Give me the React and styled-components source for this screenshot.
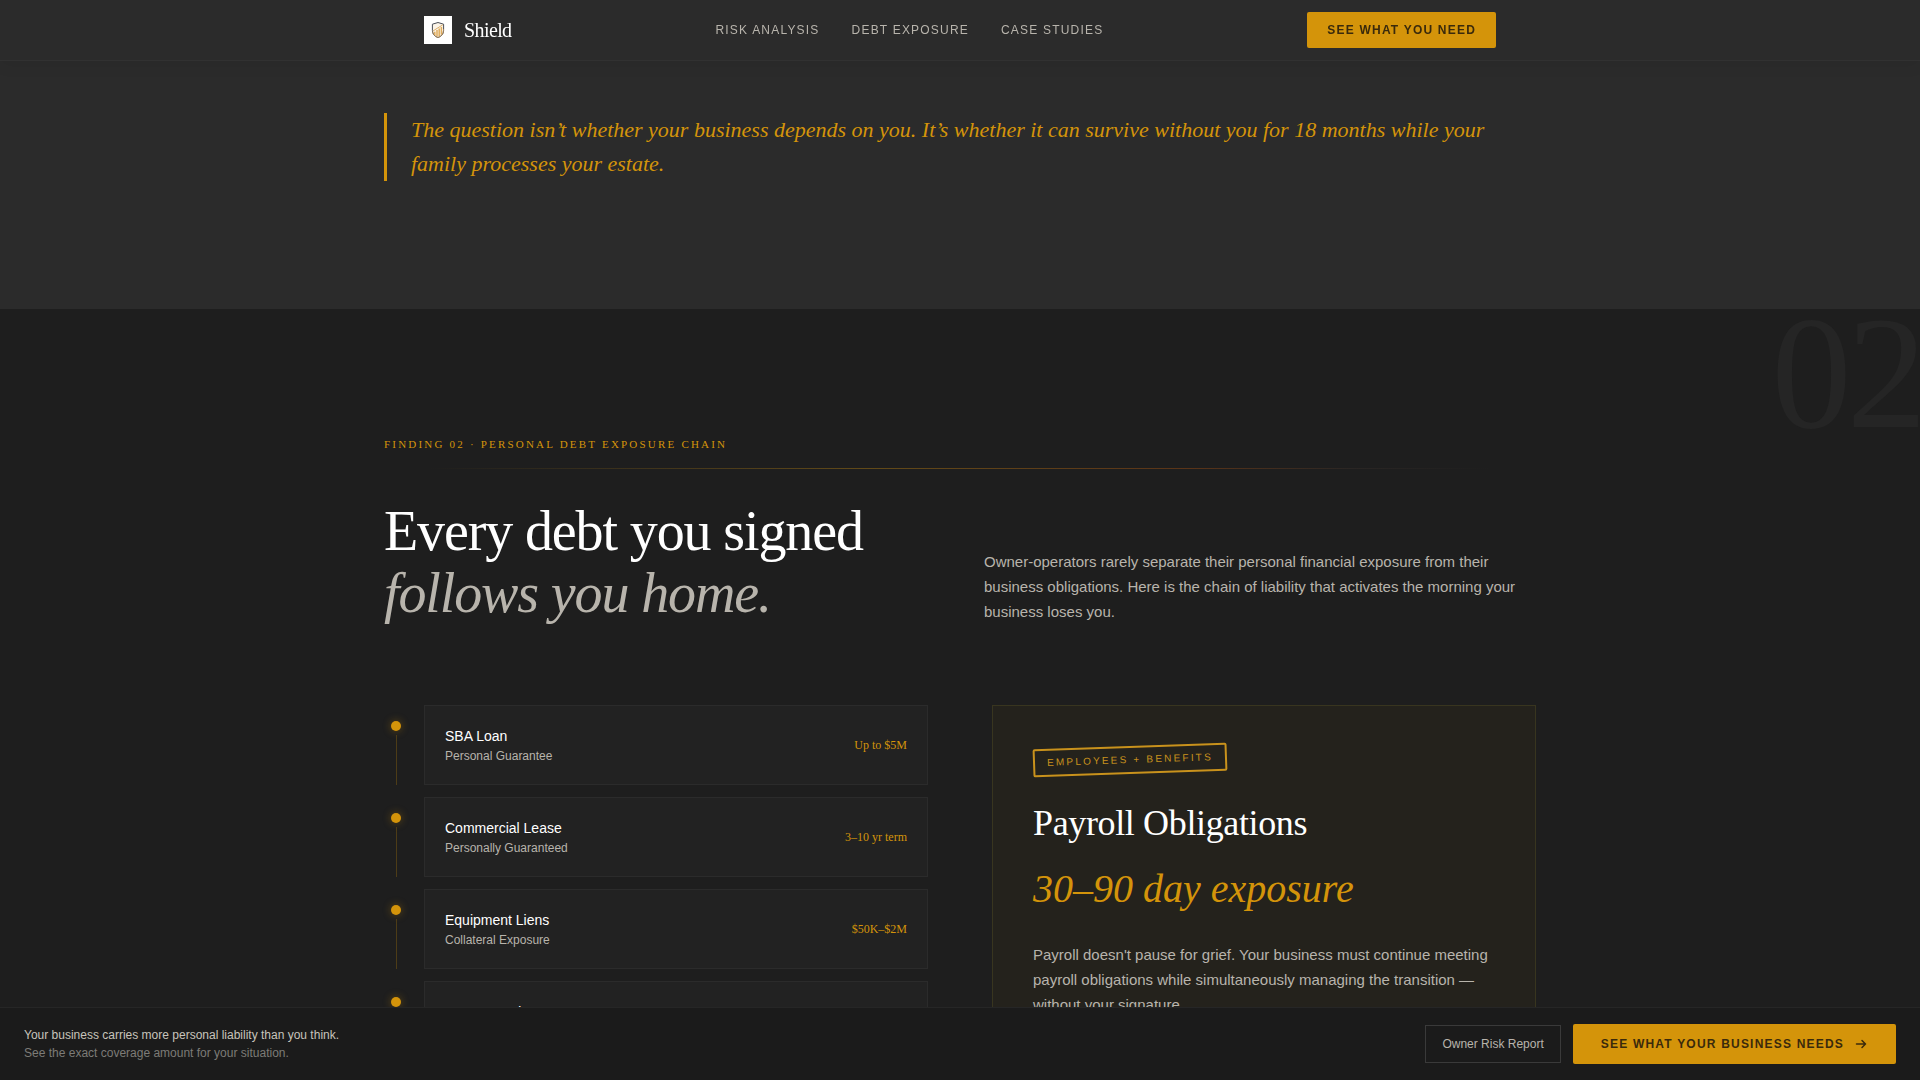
import React from "react";
import styled, { createGlobalStyle } from "styled-components";

const serif = `"Liberation Serif", "Times New Roman", serif`;
const sans = `"Liberation Sans", Arial, sans-serif`;

const debts = [
  { title: "SBA Loan", note: "Personal Guarantee", amount: "Up to $5M" },
  { title: "Commercial Lease", note: "Personally Guaranteed", amount: "3–10 yr term" },
  { title: "Equipment Liens", note: "Collateral Exposure", amount: "$50K–$2M" },
  { title: "Revenue Advance", note: "Personal Guarantee", amount: "$25K–$500K" },
];

function ShieldLogo() {
  return (
    <svg width="28" height="28" viewBox="0 0 28 28" aria-hidden="true">
      <rect width="28" height="28" fill="#ffffff" />
      <path d="M14 6.5 L19.6 8.2 V14.5 C19.6 18 17.4 20.4 14 21.6 C10.6 20.4 8.4 18 8.4 14.5 V8.2 Z" fill="#fbf4e8" stroke="#4a4f58" strokeWidth="1" />
      <path d="M8.5 15.5 C8.9 18.3 10.9 20.4 14 21.5 C17.1 20.4 19.5 18 19.5 14.5 V13" fill="none" stroke="#a8875c" strokeWidth="1" />
      <path d="M10.8 19 V15.8 M13 20.3 V14 M15.2 20.3 V12.5 M17.4 18.6 V11" stroke="#e0ac5c" strokeWidth="1.5" />
      <path d="M9 15 L13 12.4 L18.8 8.8" fill="none" stroke="#d8a860" strokeWidth="0.9" />
    </svg>
  );
}

function Arrow() {
  return (
    <svg width="14" height="14" viewBox="0 0 14 14" fill="none" stroke="currentColor" strokeWidth="1.5" strokeLinecap="round" strokeLinejoin="round" aria-hidden="true">
      <path d="M2.5 7 H11.5 M8 3.5 L11.5 7 L8 10.5" />
    </svg>
  );
}

function DebtItem({ title, note, amount }) {
  return (
    <Item>
      <Track>
        <Dot />
        <Stem />
      </Track>
      <DebtCard>
        <div>
          <DebtTitle>{title}</DebtTitle>
          <DebtNote>{note}</DebtNote>
        </div>
        <Amount>{amount}</Amount>
      </DebtCard>
    </Item>
  );
}

function App() {
  return (
    <>
      <GlobalStyle />
      <Header>
        <HeaderInner>
          <Brand href="#top">
            <ShieldLogo />
            Shield
          </Brand>
          <Nav>
            <NavLink href="#risk">Risk Analysis</NavLink>
            <NavLink href="#debt">Debt Exposure</NavLink>
            <NavLink href="#cases">Case Studies</NavLink>
          </Nav>
          <Button>See What You Need</Button>
        </HeaderInner>
      </Header>

      <main>
        <QuoteSection>
          <Container>
            <Quote>
              The question isn’t whether your business depends on you. It’s whether it can survive without you for 18 months while your
              family processes your estate.
            </Quote>
          </Container>
        </QuoteSection>

        <DebtSection id="debt">
          <Numeral aria-hidden="true">02</Numeral>
          <Container>
            <Eyebrow>Finding 02 · Personal Debt Exposure Chain</Eyebrow>
            <Rule />
            <Intro>
              <Heading>
                Every debt you signed <em>follows you home.</em>
              </Heading>
              <Copy>
                Owner-operators rarely separate their personal financial exposure from their business obligations. Here is the chain of
                liability that activates the morning your business loses you.
              </Copy>
            </Intro>
            <Columns>
              <List>
                {debts.map((debt) => (
                  <DebtItem key={debt.title} {...debt} />
                ))}
              </List>
              <Panel>
                <Stamp>Employees + Benefits</Stamp>
                <PanelTitle>Payroll Obligations</PanelTitle>
                <PanelFigure>30–90 day exposure</PanelFigure>
                <Copy>
                  Payroll doesn't pause for grief. Your business must continue meeting payroll obligations while simultaneously managing the
                  transition — without your signature.
                </Copy>
              </Panel>
            </Columns>
          </Container>
        </DebtSection>
      </main>

      <BottomBar>
        <div>
          <BarText>Your business carries more personal liability than you think.</BarText>
          <BarText $muted>See the exact coverage amount for your situation.</BarText>
        </div>
        <BarActions>
          <OutlineButton>Owner Risk Report</OutlineButton>
          <Button $large>
            See What Your Business Needs
            <Arrow />
          </Button>
        </BarActions>
      </BottomBar>
    </>
  );
}

const GlobalStyle = createGlobalStyle`
  * {
    box-sizing: border-box;
    margin: 0;
    padding: 0;
  }

  body {
    background: #1e1e1e;
    color: #ffffff;
    font-family: ${sans};
  }
`;

const Container = styled.div`
  width: 100%;
  max-width: 1152px;
  margin: 0 auto;
`;

const Header = styled.header`
  position: fixed;
  top: 0;
  left: 0;
  right: 0;
  z-index: 10;
  background: #2b2b2b;
  border-bottom: 1px solid #313131;
  box-shadow: 0 4px 16px rgba(0, 0, 0, 0.06);
`;

const HeaderInner = styled(Container)`
  display: flex;
  align-items: center;
  justify-content: space-between;
  padding: 12px 40px;
`;

const Brand = styled.a`
  display: flex;
  align-items: center;
  gap: 12px;
  font-family: ${serif};
  font-size: 20px;
  letter-spacing: -0.03em;
  color: #ffffff;
  text-decoration: none;
`;

const Nav = styled.nav`
  display: flex;
  gap: 32px;
`;

const NavLink = styled.a`
  font-size: 12px;
  letter-spacing: 0.1em;
  text-transform: uppercase;
  text-decoration: none;
  color: #b8b4ac;
`;

const Button = styled.button`
  display: flex;
  align-items: center;
  gap: 10px;
  height: ${(props) => (props.$large ? "40px" : "36px")};
  padding: 0 ${(props) => (props.$large ? "28px" : "20px")};
  border: none;
  border-radius: 2px;
  background: #d4940a;
  color: #3a2a0c;
  font-family: ${sans};
  font-size: 12px;
  font-weight: 700;
  letter-spacing: 0.1em;
  text-transform: uppercase;
`;

const QuoteSection = styled.section`
  background: #2b2b2b;
  padding: 113px 0 128px;
`;

const Quote = styled.blockquote`
  padding-left: 24px;
  border-left: 3px solid #d4940a;
  font-family: ${serif};
  font-size: 22px;
  font-style: italic;
  line-height: 34px;
  color: #d4940a;
`;

const DebtSection = styled.section`
  position: relative;
  overflow: hidden;
  padding: 128px 0;
  background: #1e1e1e;
`;

const Numeral = styled.span`
  position: absolute;
  top: -16px;
  right: -2px;
  font-family: ${serif};
  font-size: 160px;
  line-height: 1;
  letter-spacing: -0.03em;
  color: #252525;
`;

const Eyebrow = styled.p`
  font-family: ${serif};
  font-size: 11px;
  line-height: 14px;
  letter-spacing: 0.2em;
  text-transform: uppercase;
  color: #d4940a;
`;

const Rule = styled.div`
  height: 1px;
  margin: 17px 0 31px;
  background: linear-gradient(90deg, transparent 4%, #624a18 42%, #5a3418 70%, #2a2624 84%, transparent 96%);
`;

const Intro = styled.div`
  display: grid;
  grid-template-columns: 1fr 1fr;
  align-items: end;
  gap: 48px;
  margin-bottom: 81px;
`;

const Heading = styled.h2`
  font-family: ${serif};
  font-size: 56px;
  font-weight: 400;
  line-height: 62px;
  letter-spacing: -0.02em;

  em {
    display: block;
    color: #b8b4ac;
  }
`;

const Copy = styled.p`
  font-size: 15px;
  line-height: 25px;
  color: #b8b4ac;
`;

const Columns = styled.div`
  display: grid;
  grid-template-columns: 1fr 1fr;
  align-items: start;
  gap: 64px;
`;

const List = styled.ul`
  display: grid;
  gap: 12px;
  list-style: none;
`;

const Item = styled.li`
  display: flex;
  gap: 16px;
`;

const Track = styled.div`
  display: flex;
  flex-direction: column;
  align-items: center;
  width: 24px;
  gap: 4px;
`;

const Dot = styled.span`
  width: 10px;
  height: 10px;
  margin-top: 16px;
  border-radius: 50%;
  background: #d4940a;
  box-shadow: 0 0 8px rgba(212, 148, 10, 0.4);
`;

const Stem = styled.span`
  flex: 1;
  width: 1px;
  background: #4d3c17;
`;

const DebtCard = styled.div`
  flex: 1;
  display: flex;
  align-items: center;
  justify-content: space-between;
  min-height: 80px;
  padding: 0 20px;
  border: 1px solid #2b2b2b;
  background: #222222;
`;

const DebtTitle = styled.h3`
  font-size: 14px;
  font-weight: 400;
  line-height: 22px;
`;

const DebtNote = styled.p`
  font-size: 12px;
  line-height: 18px;
  color: #b8b4ac;
`;

const Amount = styled.span`
  font-family: ${serif};
  font-size: 12px;
  color: #d4940a;
`;

const Panel = styled.article`
  padding: 40px;
  border: 1px solid #38351f;
  background: #24221c;
`;

const Stamp = styled.span`
  display: inline-block;
  padding: 4px 12px;
  border: 2px solid #c9921c;
  border-radius: 2px;
  font-size: 10px;
  line-height: 16px;
  letter-spacing: 0.22em;
  text-transform: uppercase;
  color: #c9921c;
  transform: rotate(-2deg);
`;

const PanelTitle = styled.h3`
  margin-top: 28px;
  font-family: ${serif};
  font-size: 36px;
  font-weight: 400;
  line-height: 42px;
  letter-spacing: -0.01em;
`;

const PanelFigure = styled.p`
  margin: 24px 0 32px;
  font-family: ${serif};
  font-size: 40px;
  font-style: italic;
  line-height: 42px;
  color: #d4940a;
`;

const BottomBar = styled.aside`
  position: fixed;
  bottom: 0;
  left: 0;
  right: 0;
  z-index: 10;
  display: flex;
  align-items: center;
  justify-content: space-between;
  padding: 16px 24px;
  border-top: 1px solid #262626;
  background: #1b1b1b;
`;

const BarText = styled.p`
  font-size: 12px;
  line-height: 18px;
  color: ${(props) => (props.$muted ? "#7d7b77" : "#c8c4bc")};
`;

const BarActions = styled.div`
  display: flex;
  align-items: center;
  gap: 12px;
`;

const OutlineButton = styled.button`
  height: 38px;
  padding: 0 16px;
  border: 1px solid #3a3a3a;
  background: transparent;
  color: #b8b4ac;
  font-family: ${sans};
  font-size: 12px;
`;

export default App;
